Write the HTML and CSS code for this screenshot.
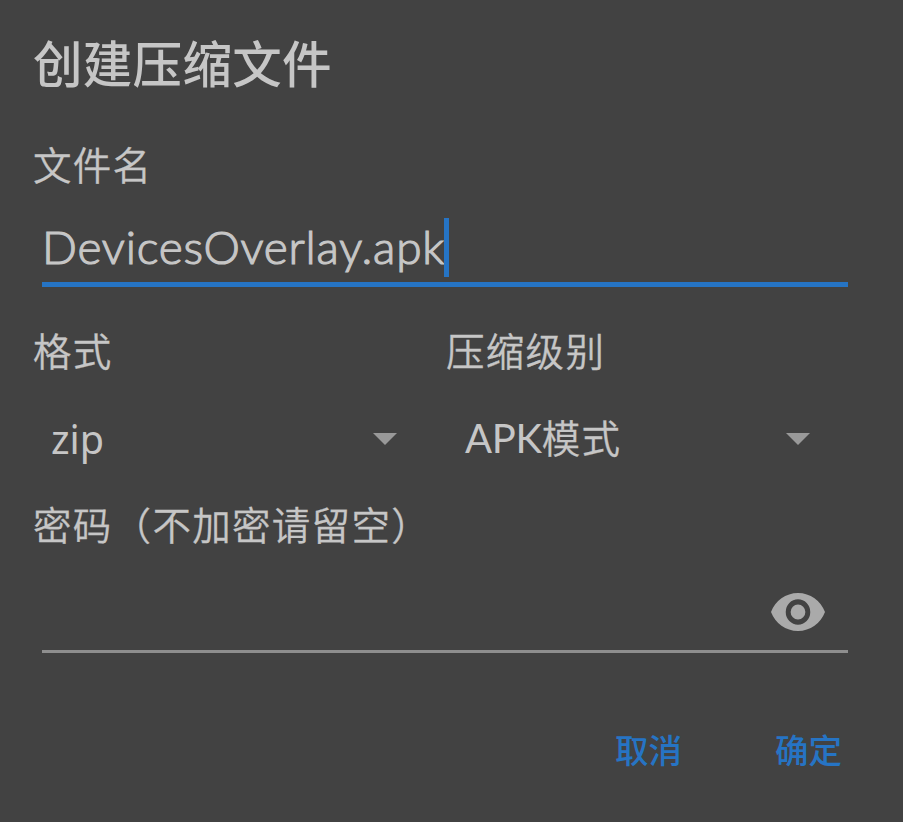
FILE: index.html
```html
<!DOCTYPE html>
<html lang="zh-CN">
<head>
<meta charset="utf-8">
<title>创建压缩文件</title>
<link rel="stylesheet" href="styles.css">
</head>
<body>
<main class="dialog">
  <h1 class="title">创建压缩文件</h1>
  <p class="label label-name">文件名</p>
  <div class="field"><span class="filename">DevicesOverlay.apk</span><span class="caret"></span></div>
  <div class="options">
    <div class="option">
      <p class="label">格式</p>
      <div class="select"><span class="zip">zip</span><i class="arrow"></i></div>
    </div>
    <div class="option">
      <p class="label">压缩级别</p>
      <div class="select"><span class="mode"><span class="latin">APK</span>模式</span><i class="arrow"></i></div>
    </div>
  </div>
  <p class="label label-password">密码（不加密请留空）</p>
  <div class="password">
    <svg class="eye" viewBox="1 4.5 22 15" preserveAspectRatio="none"><path fill-rule="evenodd" d="M12 4.5C7 4.5 2.73 7.61 1 12c1.73 4.39 6 7.5 11 7.5s9.27-3.11 11-7.5c-1.73-4.39-6-7.5-11-7.5zM12 17a5 5 0 1 1 0-10 5 5 0 0 1 0 10zm0-8a3 3 0 1 0 0 6 3 3 0 0 0 0-6z"/></svg>
  </div>
  <div class="actions"><button>取消</button><button>确定</button></div>
</main>
</body>
</html>
```
FILE: styles.css
```css
* { box-sizing: border-box; }
body { margin: 0; background: #424242; }
.dialog {
  width: 903px; height: 822px; padding: 30px 55px 0 33px;
  background: #424242; color: #c6c6c6; overflow: hidden;
  font-family: "Noto Sans CJK SC", sans-serif;
}
.title { margin: 0; font-size: 49.5px; line-height: 64px; font-weight: 500; letter-spacing: 0.3px; }
.label { margin: 0; font-size: 38.5px; line-height: 50px; font-weight: 350; letter-spacing: 1.3px; white-space: nowrap; -webkit-text-stroke: 0.3px #c6c6c6; }
.label-name { margin-top: 44px; }
.field { display: flex; align-items: center; height: 77px; margin: 22px 0 0 9px; padding-top: 2px; border-bottom: 5px solid #2674c4; }
.filename { font: 300 46px/60px Lato, sans-serif; -webkit-text-stroke: 1.2px #c6c6c6; letter-spacing: 0.8px; margin-right: -1px; }
.caret { width: 5px; height: 59px; background: #2674c4; }
.options { display: grid; grid-template-columns: 413px 413px; margin-top: 37px; }
.select { display: flex; align-items: center; justify-content: space-between; height: 60px; margin-top: 35px; padding: 0 49px 0 18px; font-size: 38.5px; font-weight: 350; }
.zip { font-family: "Noto Sans", sans-serif; font-weight: 400; font-size: 39.5px; }
.mode { position: relative; top: -3px; left: 1px; letter-spacing: 1.2px; -webkit-text-stroke: 0.3px #c6c6c6; }
.latin { letter-spacing: -0.3px; font: 400 40px Lato, sans-serif; -webkit-text-stroke: 0; }
.arrow { width: 24px; height: 12px; background: #999; clip-path: polygon(0 0, 100% 0, 50% 100%); }
.label-password { margin-top: 29px; }
.password { display: flex; justify-content: flex-end; height: 104px; margin: 1px 0 0 9px; padding: 44px 23px 0 0; border-bottom: 3px solid #8e8e8e; }
.eye { width: 54px; height: 38px; fill: #aaa; }
.actions { display: flex; justify-content: flex-end; gap: 93px; margin-top: 71px; padding-right: 6px; }
button { border: 0; padding: 0; background: none; color: #2674c4; font: 500 33.5px/50px "Noto Sans CJK SC", sans-serif; }
```
